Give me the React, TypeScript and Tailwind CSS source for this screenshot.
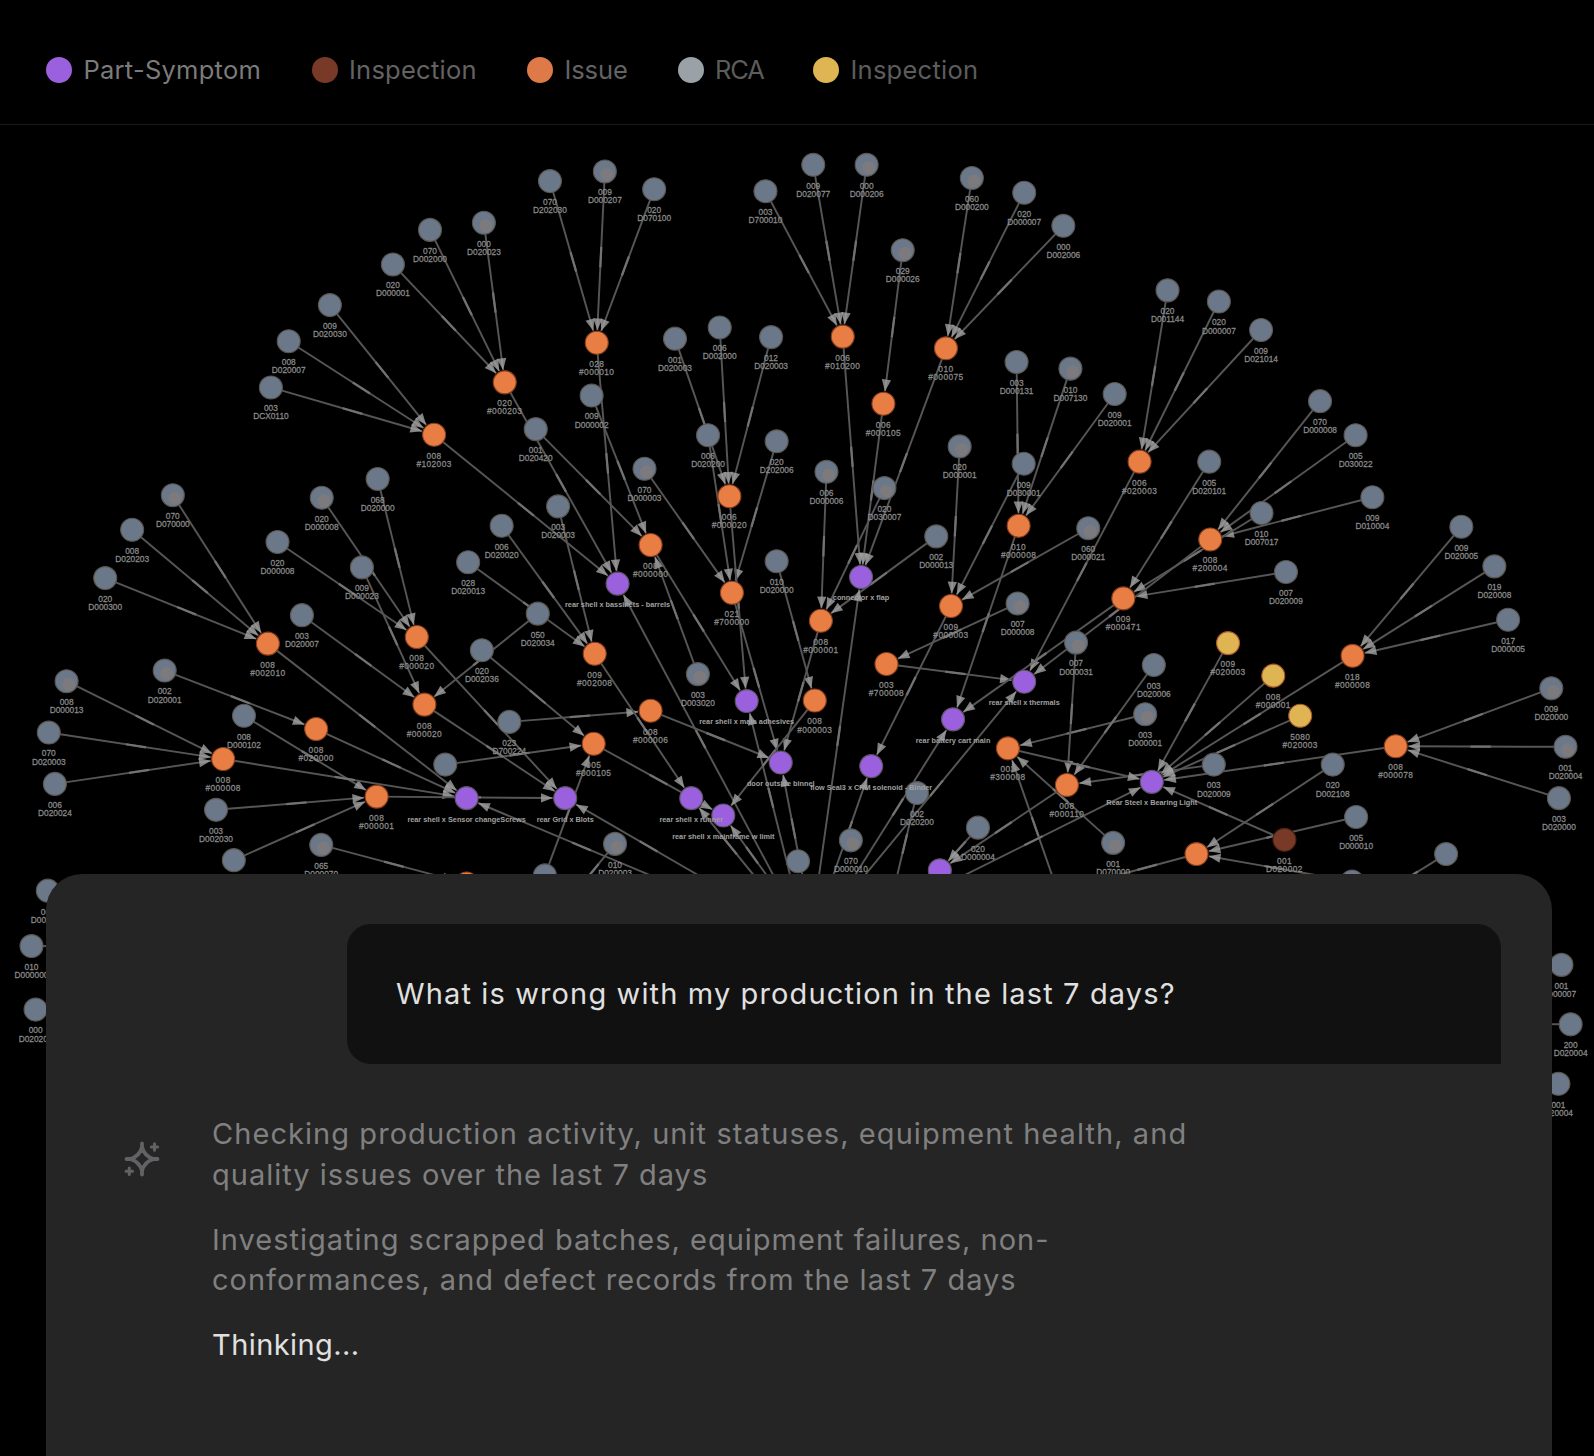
import clsx from "clsx";

type Kind = "rca" | "issue" | "symptom" | "inspection" | "defect" | "anchor";

interface GraphNode {
  x: number;
  y: number;
  kind: Kind;
  label?: string[];
  warm?: boolean;
}

const nodeStyles: Record<Kind, string> = {
  rca: "fill-[#6b7889] stroke-[#5a554f]",
  issue: "fill-[#e97e45] stroke-[#8a3f1c]",
  symptom: "fill-[#9a60dd] stroke-[#5c5560]",
  inspection: "fill-[#783a26] stroke-[#4a2114]",
  defect: "fill-[#deb552] stroke-[#a8562a]",
  anchor: "fill-none stroke-none",
};

const NODE_RADIUS = 11.3;

const rca = (x: number, y: number, a: string, b: string, warm = false): GraphNode => ({ x, y, kind: "rca", label: [a, b], warm });
const issue = (x: number, y: number, a: string, b: string): GraphNode => ({ x, y, kind: "issue", label: [a, b] });
const symptom = (x: number, y: number, label: string): GraphNode => ({ x, y, kind: "symptom", label: [label] });
const anchor = (x: number, y: number): GraphNode => ({ x, y, kind: "anchor" });

const nodes: Record<string, GraphNode> = {
  // Outer and inner RCA records
  r1: rca(541, 178, "070", "D202030"),
  r2: rca(595, 168.5, "009", "D000207", true),
  r3: rca(643.5, 186, "020", "D070100"),
  r4: rca(753, 188, "003", "D700010"),
  r5: rca(800, 162, "009", "D020077"),
  r6: rca(852.5, 162, "000", "D000206", true),
  r7: rca(956, 175, "060", "D000200", true),
  r8: rca(1007.5, 189.5, "020", "D000007"),
  r9: rca(1046, 222, "000", "D002006"),
  r10: rca(888, 246, "029", "D000026", true),
  r11: rca(386.5, 260, "020", "D000001"),
  r12: rca(423, 226, "070", "D002000"),
  r13: rca(476, 219, "000", "D020023", true),
  r14: rca(324.5, 300, "009", "D020030"),
  r15: rca(284, 335.5, "008", "D020007"),
  r16: rca(266.5, 381, "003", "DCX0110"),
  r17: rca(664, 333, "001", "D020003"),
  r18: rca(708, 322, "006", "D002000"),
  r19: rca(758.5, 331.5, "012", "D020003"),
  r20: rca(696.5, 428, "006", "D020200"),
  r21: rca(764, 434, "020", "D202006"),
  r22: rca(582, 389, "009", "D000002"),
  r23: rca(527, 422, "001", "D020420"),
  r24: rca(1148.5, 285.5, "020", "D001144"),
  r25: rca(1199, 296.5, "020", "D000007"),
  r26: rca(1240.5, 324.5, "009", "D021014"),
  r27: rca(1000, 356, "003", "D000131"),
  r28: rca(1053, 362.5, "010", "D007130", true),
  r29: rca(1096.5, 387.5, "009", "D020001"),
  r30: rca(944, 439, "020", "D000001", true),
  r31: rca(1007, 456, "009", "D030001"),
  r32: rca(1070.5, 519.5, "060", "D000021", true),
  r33: rca(1298.5, 394.5, "070", "D000008"),
  r34: rca(1333.5, 428, "005", "D030022"),
  r35: rca(1350, 489, "009", "D010004"),
  r36: rca(1241, 504.5, "010", "D007017"),
  r37: rca(1189.5, 454, "005", "D020101"),
  r38: rca(1265, 562.5, "007", "D020009"),
  r39: rca(634, 461, "070", "D000003", true),
  r40: rca(813, 464, "006", "D000006", true),
  r41: rca(870, 480, "020", "D030007", true),
  r42: rca(921, 527.5, "002", "D000013"),
  r43: rca(764, 552, "010", "D020000"),
  r44: rca(549, 498, "003", "D020003"),
  r45: rca(493.5, 517, "006", "D020020"),
  r46: rca(460.5, 553, "028", "D020013"),
  r47: rca(529, 603.5, "050", "D020034"),
  r48: rca(474, 639.5, "020", "D002036"),
  r49: rca(371.5, 471, "068", "D020000"),
  r50: rca(316.5, 489.5, "020", "D000008", true),
  r51: rca(273, 533, "020", "D000008"),
  r52: rca(356, 558, "009", "D000023"),
  r53: rca(297, 605, "003", "D020007"),
  r54: rca(170, 487, "070", "D070000", true),
  r55: rca(130, 521, "008", "D020203"),
  r56: rca(103.5, 568.5, "020", "D000300"),
  r57: rca(162, 659.5, "002", "D020001", true),
  r58: rca(65.5, 670, "008", "D000013", true),
  r59: rca(48, 720.5, "070", "D020003"),
  r60: rca(54, 771, "006", "D020024"),
  r61: rca(240, 704, "008", "D000102"),
  r62: rca(212.5, 796.5, "003", "D002030"),
  r63: rca(230, 846, "002", "D002011"),
  r64: rca(316, 831, "065", "D000070", true),
  r65: rca(438, 752, "", ""),
  r66: rca(501, 710, "023", "D700224"),
  r67: rca(686.5, 663, "003", "D003020", true),
  r68: rca(536, 861, "", ""),
  r69: rca(605, 830, "010", "D020003", true),
  r70: rca(785, 847, "", ""),
  r71: rca(837, 826.5, "070", "D000010", true),
  r72: rca(902, 780, "002", "D020200"),
  r73: rca(962, 814, "020", "D000004"),
  r74: rca(1095, 829, "001", "D070000", true),
  r75: rca(1001, 593.5, "007", "D000008", true),
  r76: rca(1058.5, 632, "007", "D000031", true),
  r77: rca(1135, 654, "003", "D020006"),
  r78: rca(1126.5, 702.5, "003", "D000001", true),
  r79: rca(1194, 752, "003", "D020009"),
  r80: rca(1311, 752, "020", "D002108"),
  r81: rca(1334, 803.5, "005", "D000010"),
  r82: rca(1330, 867, "", ""),
  r83: rca(1422.5, 840, "", ""),
  r84: rca(1437.5, 518, "009", "D020005"),
  r85: rca(1470, 557, "019", "D020008"),
  r86: rca(1483.5, 609.5, "017", "D000005"),
  r87: rca(1526, 677, "009", "D020000", true),
  r88: rca(1540, 734.5, "001", "D020004", true),
  r89: rca(1533.5, 785, "003", "D020000"),
  r90: rca(47, 876, "000", "D000120"),
  r91: rca(31, 930.5, "010", "D000000"),
  r92: rca(35, 993, "000", "D020200"),
  r93: rca(1536, 949, "001", "D00007"),
  r94: rca(1545, 1007.5, "200", "D020004"),
  r95: rca(1533, 1066, "001", "D20004"),

  // Issues
  i1: issue(587, 337, "028", "#000010"),
  i2: issue(829, 331, "006", "#010200"),
  i3: issue(930.5, 342.5, "010", "#000075"),
  i4: issue(869, 397, "006", "#000105"),
  i5: issue(496.5, 376, "020", "#000203"),
  i6: issue(427, 427.5, "008", "#102003"),
  i7: issue(717.5, 488, "006", "#000020"),
  i8: issue(720, 583, "021", "#700000"),
  i9: issue(640, 536, "008", "#000000"),
  i10: issue(1121, 454, "006", "#020003"),
  i11: issue(1002, 517, "010", "#000008"),
  i12: issue(935.5, 596, "009", "#000003"),
  i13: issue(1190.5, 530.5, "008", "#200004"),
  i14: issue(1105, 588.5, "009", "#000471"),
  i15: issue(807.5, 610.5, "008", "#000001"),
  i16: issue(801.5, 689, "008", "#000003"),
  i17: issue(585, 643, "009", "#002008"),
  i18: issue(417.5, 693, "008", "#000020"),
  i19: issue(584, 731.5, "005", "#000105"),
  i20: issue(410, 626.5, "008", "#000020"),
  i21: issue(263.5, 633, "008", "#002010"),
  i22: issue(311, 717, "008", "#020000"),
  i23: issue(219.5, 746.5, "008", "#000008"),
  i24: issue(370.5, 783.5, "008", "#000001"),
  i25: issue(640, 699, "008", "#000006"),
  i26: issue(872, 653, "003", "#700008"),
  i27: issue(991.5, 736, "003", "#300008"),
  i28: issue(1049.5, 772, "008", "#000110"),
  i29: issue(1177, 840, "", ""),
  i30: issue(1330.5, 645, "018", "#000008"),
  i31: issue(1373, 734, "008", "#000078"),
  i32: issue(459, 869, "", ""),

  // Part symptoms
  p1: symptom(607.5, 574, "rear shell x bassinets - barrels"),
  p2: symptom(847, 567.5, "connector x flap"),
  p3: symptom(734.5, 689.5, "rear shell x main adhesives"),
  p4: symptom(1007.5, 670.5, "rear shell x thermals"),
  p5: symptom(768, 750, "door outside binnel"),
  p6: symptom(857, 753.5, "flow Seal3 x CRM solenoid - Binder"),
  p7: symptom(937.5, 707.5, "rear battery cart main"),
  p8: symptom(924.5, 856, ""),
  p9: symptom(459, 785, "rear shell x Sensor changeScrews"),
  p10: symptom(556, 785, "rear Grid x Blots"),
  p11: symptom(680, 785, "rear shell x runner"),
  p12: symptom(711.5, 802, "rear shell x mainframe w limit"),
  p13: symptom(1133, 769, "Rear Steel x Bearing Light"),

  // Inspections
  y1: { x: 1208, y: 632.5, kind: "defect", label: ["009", "#020003"] },
  y2: { x: 1252.5, y: 664.5, kind: "defect", label: ["008", "#000001"] },
  y3: { x: 1279, y: 704, kind: "defect", label: ["5080", "#020003"] },
  b1: { x: 1263.5, y: 826, kind: "inspection", label: ["001", "D020002"] },

  // Edge endpoints that sit underneath the chat panel
  h1: anchor(771, 880),
  h2: anchor(782, 880),
  h3: anchor(720, 880),
  h4: anchor(757, 880),
  h5: anchor(768, 880),
  h6: anchor(803, 880),
  h7: anchor(829, 880),
  h8: anchor(835, 880),
  h9: anchor(685, 880),
  h10: anchor(813, 880),
  h11: anchor(793, 880),
  h12: anchor(878, 880),
  h13: anchor(1045, 890),
  h14: anchor(900, 885),
  h15: anchor(1350, 885),
  h16: anchor(560, 885),
  h17: anchor(1080, 866),
  h18: anchor(140, 931),
  h19: anchor(1420, 1007),
};

const edges: Record<string, string[]> = {
  i1: ["r1", "r2", "r3"],
  i2: ["r4", "r5", "r6"],
  i3: ["r7", "r8", "r9"],
  i4: ["r10"],
  i5: ["r11", "r12", "r13"],
  i6: ["r14", "r15", "r16"],
  i7: ["r17", "r18", "r19"],
  i8: ["r20", "r21", "r39"],
  i9: ["r22", "r23", "r67"],
  i10: ["r24", "r25", "r26"],
  i11: ["r27", "r28", "r29"],
  i12: ["r30", "r31", "r32"],
  i13: ["r33", "r34", "r35"],
  i14: ["r36", "r37", "r38"],
  i15: ["r40", "r41", "r42"],
  i16: ["r43"],
  i17: ["r44", "r45", "r46"],
  i18: ["r47", "r52", "r53"],
  i19: ["r48", "r65", "r68"],
  i20: ["r49", "r50", "r51"],
  i21: ["r54", "r55", "r56"],
  i22: ["r57"],
  i23: ["r58", "r59", "r60"],
  i24: ["r61", "r62", "r63"],
  i25: ["r66"],
  i26: ["r75"],
  i27: ["r74", "r78", "h13"],
  i28: ["r76", "r77", "r79"],
  i29: ["r80", "r81", "r82"],
  i30: ["r84", "r85", "r86"],
  i31: ["r87", "r88", "r89"],
  i32: ["r64"],
  p1: ["i1", "i5", "i6", "h1"],
  p2: ["i2", "i3", "i4", "h6"],
  p3: ["i7", "i9", "h2"],
  p4: ["i10", "i13", "i26", "h8"],
  p5: ["i8", "i15", "i25", "h11"],
  p6: ["i12", "h10"],
  p7: ["i11", "i14", "h7"],
  p8: ["r73", "i28"],
  p9: ["i21", "i22", "i23", "h9"],
  p10: ["i18", "i20", "i24", "h3"],
  p11: ["i17", "h4"],
  p12: ["i16", "i19", "h5"],
  p13: ["i27", "i30", "i31", "y1", "y2", "y3", "b1", "h14"],
  h12: ["r72"],
  h15: ["r83"],
  h16: ["r69"],
  h17: ["i29"],
  h18: ["r91"],
  h19: ["r94"],
};

function Edge({ from, to }: { from: GraphNode; to: GraphNode }) {
  const dx = to.x - from.x;
  const dy = to.y - from.y;
  const length = Math.hypot(dx, dy);
  const ux = dx / length;
  const uy = dy / length;
  const tipX = to.x - ux * (NODE_RADIUS + 1);
  const tipY = to.y - uy * (NODE_RADIUS + 1);
  const baseX = tipX - ux * 11.5;
  const baseY = tipY - uy * 11.5;
  const midX = (from.x + to.x) / 2;
  const midY = (from.y + to.y) / 2;

  return (
    <g>
      <line x1={from.x} y1={from.y} x2={tipX} y2={tipY} className="stroke-[#565656]" strokeWidth={1.9} />
      {/* Relationship name, too small to read at this zoom */}
      <line
        x1={midX - ux * 10}
        y1={midY - uy * 10}
        x2={midX + ux * 10}
        y2={midY + uy * 10}
        className="stroke-[#727272]"
        strokeWidth={2.2}
      />
      {to.kind !== "anchor" && (
        <polygon
          points={`${tipX},${tipY} ${baseX - uy * 4.6},${baseY + ux * 4.6} ${baseX + uy * 4.6},${baseY - ux * 4.6}`}
          className="fill-[#a3a3a3]/80"
        />
      )}
    </g>
  );
}

function NodeCircle({ node }: { node: GraphNode }) {
  if (node.kind === "anchor") return null;
  return (
    <g>
      <circle cx={node.x} cy={node.y} r={NODE_RADIUS} className={nodeStyles[node.kind]} strokeWidth={1.1} />
      {node.warm && <circle cx={node.x + 2} cy={node.y + 3} r={6.4} className="fill-[#7c7a7d]" />}
    </g>
  );
}

function NodeLabel({ node }: { node: GraphNode }) {
  if (!node.label) return null;
  if (node.kind === "symptom") {
    return (
      <text x={node.x} y={node.y + 23} textAnchor="middle" className="fill-[#a0a0a0] text-[7.2px] font-bold">
        {node.label[0]}
      </text>
    );
  }
  return (
    <text
      textAnchor="middle"
      className={clsx("fill-[#8a8a8a] stroke-[#8a8a8a] text-[8.2px]", node.kind !== "rca" && "tracking-[0.4px]")}
      strokeWidth={0.25}
    >
      <tspan x={node.x} y={node.y + 23.5}>{node.label[0]}</tspan>
      <tspan x={node.x} y={node.y + 31.5}>{node.label[1]}</tspan>
    </text>
  );
}

function KnowledgeGraph() {
  const all = Object.values(nodes);
  return (
    <svg viewBox="0 0 1568 1432" className="absolute inset-0 h-full w-full font-['Liberation_Sans',sans-serif]">
      {Object.entries(edges).flatMap(([target, sources]) =>
        sources.map((source) => <Edge key={`${source}-${target}`} from={nodes[source]} to={nodes[target]} />)
      )}
      {all.map((node, i) => (
        <NodeCircle key={i} node={node} />
      ))}
      {all.map((node, i) => (
        <NodeLabel key={i} node={node} />
      ))}
    </svg>
  );
}

const legend = [
  { label: "Part-Symptom", dot: "bg-[#9a60dd]", text: "w-[177px] tracking-[0.25px] text-[#7b7b7b]" },
  { label: "Inspection", dot: "bg-[#783a26]", text: "w-[127px] tracking-[0.25px] text-[#636363]" },
  { label: "Issue", dot: "bg-[#dd7a48]", text: "w-[62px] tracking-[-0.1px] text-[#636363]" },
  { label: "RCA", dot: "bg-[#9aa1a7]", text: "w-[47px] tracking-[-1.2px] text-[#5c5c5c]" },
  { label: "Inspection", dot: "bg-[#deb552]", text: "w-[127px] tracking-[0.25px] text-[#5c5c5c]" },
];

function Legend() {
  return (
    <header className="relative flex h-[125px] items-center gap-[51px] border-b border-[#1a1a1a] px-[46px] pt-[15px]">
      {legend.map((item, i) => (
        <div key={i} className="flex items-center gap-[11.5px]">
          <span className={clsx("size-[26px] rounded-full", item.dot)} />
          <span className={clsx("text-[25.5px] leading-8 whitespace-nowrap", item.text)}>{item.label}</span>
        </div>
      ))}
    </header>
  );
}

function SparkleIcon() {
  return (
    <svg viewBox="0 0 36 36" className="size-9 fill-none stroke-[#626264]" strokeLinecap="round" strokeLinejoin="round">
      <path
        d="M18 2.5V6C19.5 12 24 16.500 30 18H33.500H30C24 19.500 19.500 24 18 30V33.500V30C16.500 24 12 19.500 6 18H2.500H6C12 16.500 16.500 12 18 6Z"
        strokeWidth={3.8}
      />
      <path d="M30.500 2.800v6.400M27.300 6h6.400M5.300 27v6.400M2.100 30.200h6.400" strokeWidth={3} />
    </svg>
  );
}

function ChatPanel() {
  return (
    <section className="relative mt-[748.5px] ml-[46px] h-[583px] w-[1506px] rounded-t-[36px] bg-[#252525] px-[51px] pt-[50px]">
      <div className="ml-auto flex h-[140px] w-[1154px] items-center rounded-[24px] rounded-br-none bg-[#111111] pl-[49px]">
        <p className="text-[29px] tracking-[1.13px] whitespace-nowrap text-[#e0e0e0]">
          What is wrong with my production in the last 7 days?
        </p>
      </div>
      <div className="mt-[50.5px] flex gap-[52px] pl-[27px]">
        <div className="flex h-[81px] items-center pt-2">
          <SparkleIcon />
        </div>
        <div className="flex flex-col gap-[24.5px] text-[29px] leading-[40.5px] tracking-[1px] whitespace-nowrap text-[#808080]">
          <p>
            <span className="block tracking-[1.06px]">Checking production activity, unit statuses, equipment health, and</span>
            <span className="block">quality issues over the last 7 days</span>
          </p>
          <p>
            <span className="block">Investigating scrapped batches, equipment failures, non-</span>
            <span className="block">conformances, and defect records from the last 7 days</span>
          </p>
          <p className="tracking-[0.42px] text-[#e0e0e0]">Thinking...</p>
        </div>
      </div>
    </section>
  );
}

export default function App() {
  return (
    <main className="relative h-[1456px] w-[1594px] overflow-hidden bg-black font-[Inter,sans-serif]">
      <KnowledgeGraph />
      <Legend />
      <ChatPanel />
    </main>
  );
}
